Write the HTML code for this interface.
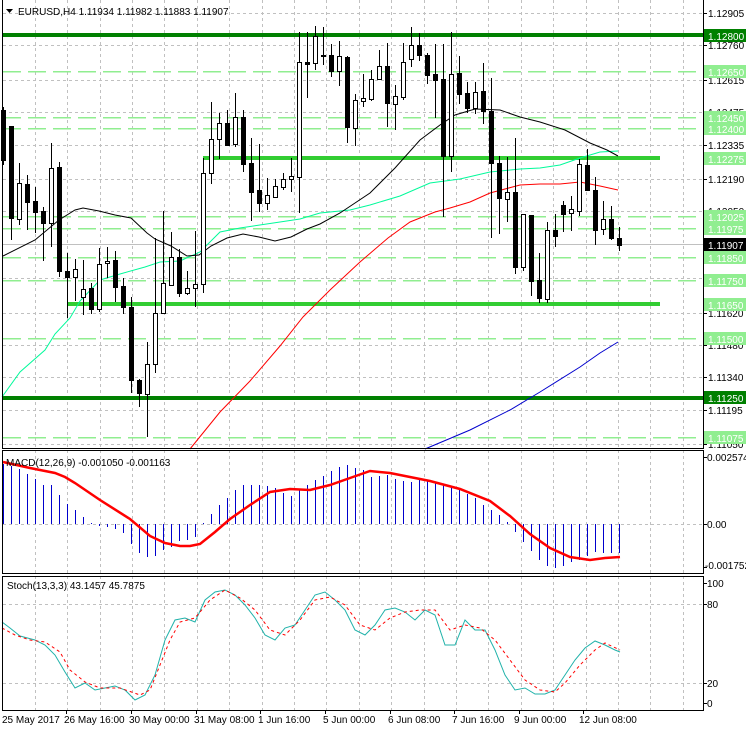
<!DOCTYPE html>
<html><head><meta charset="utf-8"><style>
html,body{margin:0;padding:0;background:#fff;}
svg{display:block;font-family:"Liberation Sans",sans-serif;font-size:10px;}
</style></head><body>
<svg width="746" height="731" viewBox="0 0 746 731" xmlns="http://www.w3.org/2000/svg">
<rect width="746" height="731" fill="#fff"/>
<g stroke="#c0c0c0" stroke-dasharray="3,3" stroke-width="1" shape-rendering="crispEdges">
<path d="M3 13.5H703M3 45.5H703M3 80.5H703M3 112.5H703M3 145.5H703M3 179.5H703M3 211.5H703M3 278.5H703M3 313.5H703M3 345.5H703M3 377.5H703M3 410.5H703M3 444.5H703"/>
<path d="M3 524.5H703M3 604.5H703M3 683.5H703"/>
<path d="M35.5 0V710M67.5 0V710M100.5 0V710M132.5 0V710M164.5 0V710M197.5 0V710M229.5 0V710M262.5 0V710M294.5 0V710M326.5 0V710M359.5 0V710M391.5 0V710M424.5 0V710M456.5 0V710M488.5 0V710M521.5 0V710M553.5 0V710M586.5 0V710M618.5 0V710M650.5 0V710M683.5 0V710"/>
</g>
<rect x="0" y="449" width="703" height="2" fill="#fff"/>
<rect x="0" y="574" width="703" height="2" fill="#fff"/>
<g stroke="#90ee90" stroke-width="1.5" stroke-dasharray="18,7" shape-rendering="crispEdges">
<path d="M3 71.5H703M3 117.5H703M3 128.5H703M3 216.5H703M3 228.5H703M3 257.5H703M3 280.5H703M3 338.5H703M3 437.5H703"/>
</g>
<path d="M3 244.5H703" stroke="#c0c0c0" stroke-width="1"/>
<g shape-rendering="crispEdges">
<rect x="3" y="33" width="700" height="4" fill="#008000"/>
<rect x="3" y="396" width="700" height="4" fill="#008000"/>
<rect x="203" y="156" width="457" height="4" fill="#32cd32"/>
<rect x="67" y="302" width="593" height="4" fill="#32cd32"/>
</g>
<g fill="none" stroke-width="1">
<polyline stroke="#0000cd" points="425,449 470,430 510,410 540,392 580,367 600,353 618,342"/>
<polyline stroke="#ff0000" points="190,449 220,412 250,381 280,346 303,317 330,290 360,262 388,238 410,222 435,212 450,208 470,202 490,193 520,185 540,184 560,184 580,182 600,186 618,190"/>
<polyline stroke="#00fa9a" points="2,397 20,372 45,350 55,334 70,318 80,301 100,280 120,274 145,267 160,262 180,261 200,252 220,232 240,228 280,222 300,219 320,213 350,210 370,205 400,196 430,183 460,179 490,172 520,169 540,168 560,165 580,158 600,152 618,151"/>
<polyline stroke="#000" points="3,256 35,240 59,220 75,210 83,208 99,211 115,215 131,218 147,233 155,239 171,246 187,256 199,255 211,246 227,238 243,234 259,237 275,241 291,237 307,229 320,224 340,213 370,193 395,168 420,140 440,125 455,115 475,109 500,110 520,117 540,122 565,130 590,143 607,150 618,156"/>
</g>
<path stroke="#000" stroke-width="1" shape-rendering="crispEdges" d="M3.5 107V165M11.5 126V240M19.5 163V225M27.5 175V230M35.5 187V233M43.5 207V261M51.5 143V247M59.5 162V277M67.5 253V318M75.5 259V301M83.5 260V315M91.5 283V314M99.5 248V312M107.5 247V278M115.5 251V302M123.5 278V314M131.5 297V393M139.5 379V407M147.5 342V437M155.5 238V373M163.5 211V313M171.5 232V286M179.5 249V297M187.5 271V295M195.5 231V307M203.5 158V293M211.5 102V184M219.5 113V159M227.5 110V145M235.5 93V147M243.5 110V172M251.5 138V221M259.5 144V212M267.5 178V210M275.5 179V197M283.5 173V190M291.5 158V192M299.5 32V213M307.5 32V98M315.5 26V70M323.5 27V65M331.5 44V77M339.5 41V86M347.5 56V143M355.5 94V146M363.5 74V107M371.5 70V101M379.5 50V79M387.5 43V127M395.5 85V130M403.5 43V100M411.5 27V67M419.5 33V61M427.5 53V84M435.5 44V118M443.5 44V217M451.5 32V172M459.5 56V104M467.5 82V113M475.5 82V114M483.5 63V124M491.5 78V238M499.5 156V234M507.5 157V222M515.5 138V274M523.5 214V271M531.5 215V296M539.5 253V303M547.5 222V303M555.5 214V247M563.5 201V232M571.5 196V231M579.5 159V216M587.5 149V190M595.5 177V245M603.5 201V235M611.5 206V240M619.5 227V251"/>
<g fill="#000" stroke="#000" shape-rendering="crispEdges">
<rect x="1.5" y="110.5" width="4" height="50"/>
<rect x="9.5" y="126.5" width="4" height="92"/>
<rect x="25.5" y="184.5" width="4" height="18"/>
<rect x="33.5" y="201.5" width="4" height="11"/>
<rect x="41.5" y="211.5" width="4" height="12"/>
<rect x="57.5" y="167.5" width="4" height="104"/>
<rect x="65.5" y="271.5" width="4" height="6"/>
<rect x="89.5" y="288.5" width="4" height="21"/>
<rect x="113.5" y="260.5" width="4" height="27"/>
<rect x="121.5" y="286.5" width="4" height="21"/>
<rect x="129.5" y="307.5" width="4" height="73"/>
<rect x="137.5" y="380.5" width="4" height="13"/>
<rect x="177.5" y="257.5" width="4" height="36"/>
<rect x="225.5" y="123.5" width="4" height="22"/>
<rect x="241.5" y="117.5" width="4" height="47"/>
<rect x="249.5" y="163.5" width="4" height="29"/>
<rect x="257.5" y="190.5" width="4" height="13"/>
<rect x="305.5" y="62.5" width="4" height="2"/>
<rect x="321.5" y="55.5" width="4" height="1"/>
<rect x="329.5" y="55.5" width="4" height="16"/>
<rect x="345.5" y="57.5" width="4" height="70"/>
<rect x="385.5" y="66.5" width="4" height="37"/>
<rect x="417.5" y="45.5" width="4" height="10"/>
<rect x="425.5" y="55.5" width="4" height="20"/>
<rect x="433.5" y="74.5" width="4" height="6"/>
<rect x="441.5" y="79.5" width="4" height="77"/>
<rect x="457.5" y="73.5" width="4" height="21"/>
<rect x="465.5" y="93.5" width="4" height="15"/>
<rect x="481.5" y="91.5" width="4" height="20"/>
<rect x="489.5" y="111.5" width="4" height="52"/>
<rect x="497.5" y="163.5" width="4" height="35"/>
<rect x="513.5" y="192.5" width="4" height="75"/>
<rect x="529.5" y="215.5" width="4" height="66"/>
<rect x="537.5" y="280.5" width="4" height="18"/>
<rect x="553.5" y="230.5" width="4" height="6"/>
<rect x="561.5" y="205.5" width="4" height="9"/>
<rect x="585.5" y="165.5" width="4" height="25"/>
<rect x="593.5" y="190.5" width="4" height="40"/>
<rect x="609.5" y="219.5" width="4" height="19"/>
<rect x="617.5" y="238.5" width="4" height="7"/>
</g>
<g fill="#fff" stroke="#000" shape-rendering="crispEdges">
<rect x="17.5" y="183.5" width="4" height="36"/>
<rect x="49.5" y="168.5" width="4" height="55"/>
<rect x="73.5" y="269.5" width="4" height="8"/>
<rect x="81.5" y="289.5" width="4" height="8"/>
<rect x="97.5" y="264.5" width="4" height="45"/>
<rect x="105.5" y="261.5" width="4" height="2"/>
<rect x="145.5" y="364.5" width="4" height="30"/>
<rect x="153.5" y="313.5" width="4" height="51"/>
<rect x="161.5" y="283.5" width="4" height="30"/>
<rect x="169.5" y="257.5" width="4" height="28"/>
<rect x="185.5" y="288.5" width="4" height="5"/>
<rect x="193.5" y="284.5" width="4" height="4"/>
<rect x="201.5" y="173.5" width="4" height="111"/>
<rect x="209.5" y="139.5" width="4" height="34"/>
<rect x="217.5" y="123.5" width="4" height="16"/>
<rect x="233.5" y="117.5" width="4" height="27"/>
<rect x="265.5" y="195.5" width="4" height="8"/>
<rect x="273.5" y="186.5" width="4" height="11"/>
<rect x="281.5" y="179.5" width="4" height="8"/>
<rect x="289.5" y="176.5" width="4" height="3"/>
<rect x="297.5" y="62.5" width="4" height="115"/>
<rect x="313.5" y="36.5" width="4" height="27"/>
<rect x="337.5" y="56.5" width="4" height="15"/>
<rect x="353.5" y="100.5" width="4" height="28"/>
<rect x="361.5" y="98.5" width="4" height="3"/>
<rect x="369.5" y="79.5" width="4" height="20"/>
<rect x="377.5" y="66.5" width="4" height="13"/>
<rect x="393.5" y="96.5" width="4" height="8"/>
<rect x="401.5" y="62.5" width="4" height="35"/>
<rect x="409.5" y="45.5" width="4" height="14"/>
<rect x="449.5" y="74.5" width="4" height="82"/>
<rect x="473.5" y="92.5" width="4" height="16"/>
<rect x="505.5" y="192.5" width="4" height="7"/>
<rect x="521.5" y="214.5" width="4" height="53"/>
<rect x="545.5" y="230.5" width="4" height="69"/>
<rect x="569.5" y="209.5" width="4" height="4"/>
<rect x="577.5" y="164.5" width="4" height="47"/>
<rect x="601.5" y="219.5" width="4" height="10"/>
</g>
<path stroke="#0000cd" stroke-width="1" shape-rendering="crispEdges" d="M3.5 524V464M11.5 524V466M19.5 524V469M27.5 524V474M35.5 524V479M43.5 524V485M51.5 524V485M59.5 524V495M67.5 524V504M75.5 524V510M83.5 524V517M91.5 524V523M99.5 524V526M107.5 524V527M115.5 524V529M123.5 524V533M131.5 524V544M139.5 524V553M147.5 524V557M155.5 524V556M163.5 524V550M171.5 524V547M179.5 524V541M187.5 524V540M195.5 524V537M203.5 524V523M211.5 524V514M219.5 524V505M227.5 524V498M235.5 524V490M243.5 524V485M251.5 524V485M259.5 524V485M267.5 524V486M275.5 524V488M283.5 524V493M291.5 524V496M299.5 524V490M307.5 524V485M315.5 524V480M323.5 524V476M331.5 524V471M339.5 524V467M347.5 524V465M355.5 524V468M363.5 524V470M371.5 524V477M379.5 524V476M387.5 524V475M395.5 524V479M403.5 524V481M411.5 524V482M419.5 524V479M427.5 524V480M435.5 524V482M443.5 524V485M451.5 524V488M459.5 524V490M467.5 524V494M475.5 524V498M483.5 524V505M491.5 524V510M499.5 524V515M507.5 524V522M515.5 524V532M523.5 524V542M531.5 524V551M539.5 524V560M547.5 524V566M555.5 524V568M563.5 524V566M571.5 524V562M579.5 524V560M587.5 524V556M595.5 524V552M603.5 524V553M611.5 524V553M619.5 524V553"/>
<polyline fill="none" stroke="#ff0000" stroke-width="2.5" points="3,462 30,468 55,473 65,477 75,483 100,500 130,519 150,536 165,543 180,546 190,546 200,544 215,532 230,519 250,505 270,492 290,489 310,490 330,485 350,478 370,471 390,473 410,477 430,481 460,489 490,501 510,516 530,534 550,548 570,557 590,560 605,558 620,557"/>
<polyline fill="none" stroke="#20b2aa" stroke-width="1" points="2,622 10,628 20,636 35,640 45,645 55,655 65,672 75,688 85,683 95,690 105,688 115,686 125,690 135,700 145,695 155,675 165,640 175,620 185,618 195,622 205,600 215,592 225,590 235,595 245,605 255,618 265,635 275,640 285,628 295,625 305,610 315,595 325,592 335,600 345,610 355,630 365,635 375,625 385,610 395,608 405,612 415,620 425,610 435,615 445,645 455,645 465,620 475,630 485,630 495,650 505,675 515,690 525,688 535,694 545,694 555,690 565,675 575,660 585,648 595,641 605,645 615,650 620,652"/>
<polyline fill="none" stroke="#ff0000" stroke-width="1" stroke-dasharray="3,3" points="2,628 15,635 30,640 45,642 60,652 70,670 85,682 100,688 120,688 140,695 150,690 160,665 170,640 180,622 195,618 210,600 225,590 240,598 255,610 270,630 285,635 300,620 315,600 330,597 345,605 360,625 375,630 390,618 405,612 420,610 435,610 450,630 465,625 480,628 495,640 510,660 525,680 540,690 555,692 565,683 580,665 595,650 605,643 620,650"/>
<g fill="none" stroke="#000" stroke-width="1" shape-rendering="crispEdges">
<path d="M2.5 0V448.5H703.5V0"/>
<rect x="2.5" y="450.5" width="701" height="123"/>
<rect x="2.5" y="576.5" width="701" height="134"/>
</g>
<path stroke="#000" shape-rendering="crispEdges" d="M703 13.5h4M703 45.5h4M703 80.5h4M703 112.5h4M703 145.5h4M703 179.5h4M703 211.5h4M703 313.5h4M703 345.5h4M703 377.5h4M703 410.5h4M703 444.5h4M703 457.5h4M703 524.5h4M703 567.5h4M703 583.5h4M703 604.5h4M703 683.5h4M703 703.5h4M66.5 710v4M131.5 710v4M196.5 710v4M260.5 710v4M325.5 710v4M390.5 710v4M454.5 710v4M519.5 710v4M583.5 710v4"/>
<g fill="#000">
<text x="708" y="17">1.12905</text>
<text x="708" y="49">1.12760</text>
<text x="708" y="84">1.12615</text>
<text x="708" y="116">1.12475</text>
<text x="708" y="149">1.12335</text>
<text x="708" y="183">1.12190</text>
<text x="708" y="215">1.12050</text>
<text x="708" y="317">1.11620</text>
<text x="708" y="349">1.11480</text>
<text x="708" y="381">1.11340</text>
<text x="708" y="414">1.11195</text>
<text x="708" y="448">1.11050</text>
<text x="707" y="461">0.002574</text>
<text x="707" y="528">0.00</text>
<text x="705" y="569">-0.001752</text>
<text x="707" y="587">100</text>
<text x="707" y="608">80</text>
<text x="707" y="687">20</text>
<text x="707" y="707">0</text>
</g>
<g shape-rendering="crispEdges">
<rect x="704" y="29" width="42" height="13" fill="#008000"/>
<rect x="704" y="65" width="42" height="13" fill="#90ee90"/>
<rect x="704" y="111" width="42" height="13" fill="#90ee90"/>
<rect x="704" y="122" width="42" height="13" fill="#90ee90"/>
<rect x="704" y="152" width="42" height="13" fill="#90ee90"/>
<rect x="704" y="210" width="42" height="13" fill="#90ee90"/>
<rect x="704" y="222" width="42" height="13" fill="#90ee90"/>
<rect x="704" y="238" width="42" height="13" fill="#000"/>
<rect x="704" y="251" width="42" height="13" fill="#90ee90"/>
<rect x="704" y="274" width="42" height="13" fill="#90ee90"/>
<rect x="704" y="298" width="42" height="13" fill="#90ee90"/>
<rect x="704" y="332" width="42" height="13" fill="#90ee90"/>
<rect x="704" y="391" width="42" height="13" fill="#008000"/>
<rect x="704" y="431" width="42" height="13" fill="#90ee90"/>
</g>
<g fill="#fff">
<text x="708" y="40">1.12800</text>
<text x="708" y="76">1.12650</text>
<text x="708" y="122">1.12450</text>
<text x="708" y="133">1.12400</text>
<text x="708" y="163">1.12275</text>
<text x="708" y="221">1.12025</text>
<text x="708" y="233">1.11975</text>
<text x="708" y="249">1.11907</text>
<text x="708" y="262">1.11850</text>
<text x="708" y="285">1.11750</text>
<text x="708" y="309">1.11650</text>
<text x="708" y="343">1.11500</text>
<text x="708" y="402">1.11250</text>
<text x="708" y="442">1.11075</text>
</g>
<path d="M6 9h7l-3.5 4z" fill="#000"/>
<text x="18" y="15" fill="#000">EURUSD,H4  1.11934 1.11982 1.11883 1.11907</text>
<text x="6" y="466" fill="#000">MACD(12,26,9) -0.001050 -0.001163</text>
<text x="7" y="589" fill="#000">Stoch(13,3,3) 43.1457 45.7875</text>
<g fill="#000">
<text x="2" y="723">25 May 2017</text>
<text x="64" y="723">26 May 16:00</text>
<text x="129" y="723">30 May 00:00</text>
<text x="194" y="723">31 May 08:00</text>
<text x="258" y="723">1 Jun 16:00</text>
<text x="323" y="723">5 Jun 00:00</text>
<text x="388" y="723">6 Jun 08:00</text>
<text x="452" y="723">7 Jun 16:00</text>
<text x="514" y="723">9 Jun 00:00</text>
<text x="579" y="723">12 Jun 08:00</text>
</g>
</svg>
</body></html>
